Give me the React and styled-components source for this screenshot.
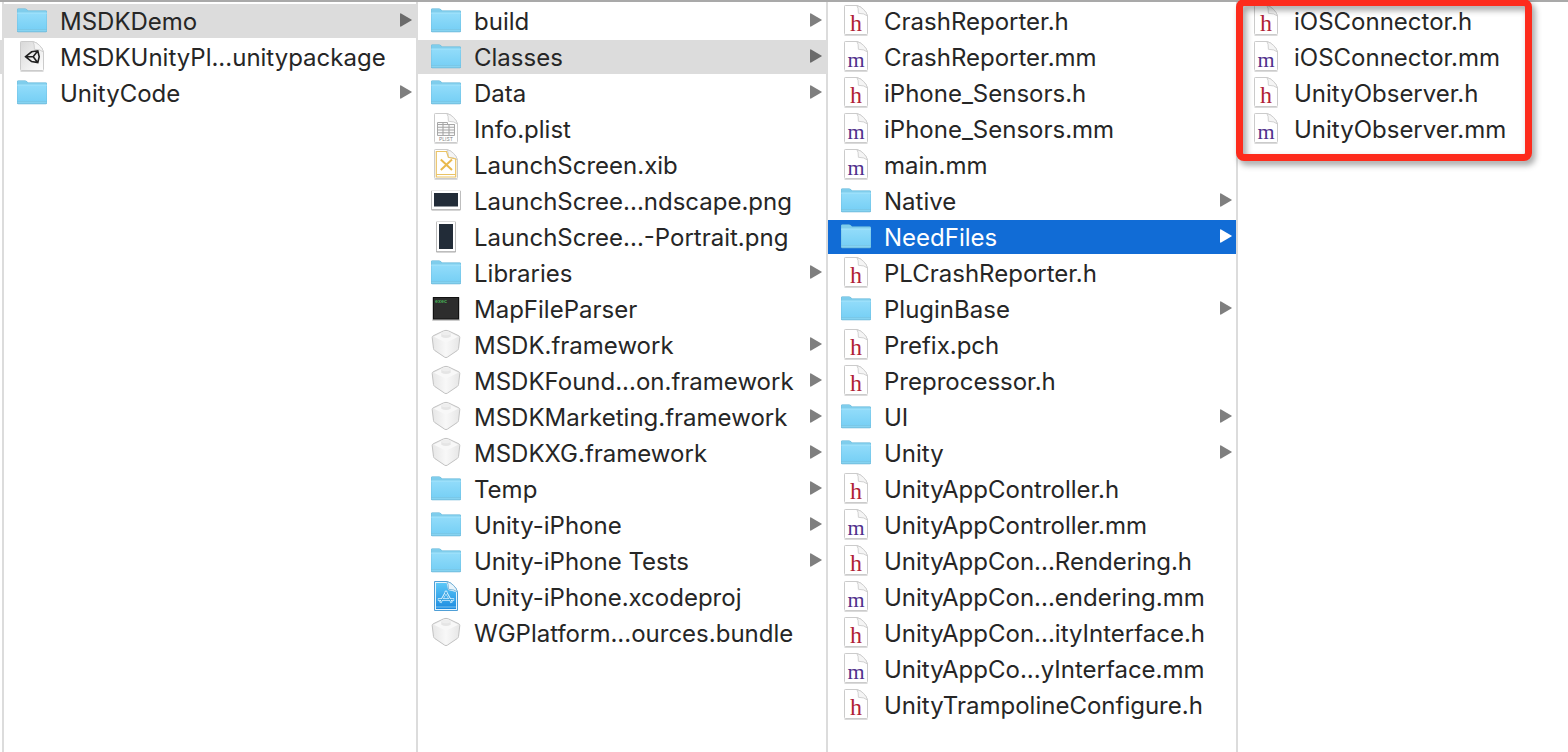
import React from "react";
import styled, { createGlobalStyle } from "styled-components";

const GlobalStyle = createGlobalStyle`
  * { box-sizing: border-box; }
  body { margin: 0; background: #ffffff; }
`;

const Browser = styled.main`
  display: flex;
  flex-direction: column;
  min-height: 100vh;
  border-top: 2px solid #a9a9a9;
  font-family: Inter, "Liberation Sans", sans-serif;
  font-size: 24px;
  color: #262626;
`;

const Columns = styled.div`
  flex: 1;
  display: grid;
  grid-template-columns: 4px 414fr 410fr 410fr 330fr;
`;

const Column = styled.section`
  min-width: 0;
  padding-top: 2px;
  border-right: ${(p) => (p.$last ? "none" : "2px solid #dcdcdc")};
`;

const PreviousRow = styled.div`
  height: 34px;
  margin-top: 36px;
  background: #dcdcdc;
`;

const FileList = styled.ul`
  position: relative;
  display: flex;
  flex-direction: column;
  gap: 2px;
  margin: 0;
  padding: 0;
  list-style: none;
`;

const rowFill = { active: "#116cd6", open: "#dcdcdc" };

const Row = styled.button`
  display: flex;
  align-items: center;
  width: 100%;
  height: 34px;
  padding: 0 4px 0 13px;
  border: 0;
  background: ${(p) => rowFill[p.$state] || "transparent"};
  color: ${(p) => (p.$state === "active" ? "#ffffff" : "inherit")};
  font: inherit;
  text-align: left;
  white-space: nowrap;
`;

const IconSlot = styled.span`
  flex: none;
  display: flex;
  width: 30px;
  height: 32px;
  margin-right: 13px;
`;

const Name = styled.span`
  flex: 1;
  min-width: 0;
  padding-top: 2px;
  line-height: 32px;
`;

const Arrow = styled.svg`
  flex: none;
  width: 12px;
  height: 34px;
  fill: ${(p) => (p.$state === "active" ? "#ffffff" : p.$state === "open" ? "#6b6b6b" : "#7f7f7f")};
`;

const Highlight = styled.li`
  position: absolute;
  top: -5px;
  left: -2px;
  width: 296px;
  height: 162px;
  border: 7px solid #fd2b1c;
  border-radius: 8px;
  filter: drop-shadow(3px 4px 3px rgba(0, 0, 0, 0.38));
  pointer-events: none;
`;

const Glyph = ({ children, box = "0 0 30 32" }) => (
  <svg width="30" height="32" viewBox={box} overflow="visible" aria-hidden="true">
    {children}
  </svg>
);

const DocumentGlyph = ({ children }) => <Glyph box="0 1 30 32">{children}</Glyph>;

const Folder = () => (
  <Glyph>
    <path d="M0 6.2V4.6Q0 3.4 1.2 3.4H8.2Q9 3.4 9.6 4L11 5.4H28.8Q30 5.4 30 6.6V26Q30 27.2 28.8 27.2H1.2Q0 27.2 0 26Z" fill="#68b4d6" />
    <path d="M.3 6.2V4.8Q.3 3.7 1.3 3.7H8.1Q8.8 3.7 9.4 4.3L11 5.8H28.7Q29.7 5.8 29.7 6.8V9H.3Z" fill="#7fcdec" />
    <path d="M.3 8H29.7V24.3H.3Z" fill="url(#folderFace)" />
    <path d="M.3 8H29.7" stroke="#a5e3fb" />
    <path d="M.3 24.4H29.7V25.8Q29.7 26.6 28.8 26.6H1.2Q.3 26.6 .3 25.8Z" fill="#86d3f1" />
  </Glyph>
);

const Sheet = ({ fill = "#ffffff" }) => (
  <>
    <path d="M3.5 31.2H26.5" stroke="#c4c4c4" strokeWidth="1.4" opacity=".7" />
    <path d="M4.3 1.5H16L20 3.3L24.8 8.2L26.5 12V29.5Q26.5 30.5 25.5 30.5H4.5Q3.5 30.5 3.5 29.5V2.3Q3.5 1.5 4.3 1.5Z" fill={fill} stroke="#cbcbcb" />
    <path d="M15.8 1.5Q17.6 3.6 17.4 9.3Q23.4 9.2 26.5 12Q25.6 8.4 22.6 5.4T15.8 1.5Z" fill="#f5f5f5" stroke="#cccccc" strokeWidth=".9" />
  </>
);

const Header = () => (
  <DocumentGlyph>
    <Sheet />
    <text x="15" y="26.5" textAnchor="middle" fontFamily="Liberation Serif, serif" fontSize="24" fill="#b02235">h</text>
  </DocumentGlyph>
);

const Source = () => (
  <DocumentGlyph>
    <Sheet />
    <text x="15" y="26.5" textAnchor="middle" fontFamily="Liberation Serif, serif" fontSize="22" fill="#50308c">m</text>
  </DocumentGlyph>
);

const UnityPackage = () => (
  <DocumentGlyph>
    <Sheet fill="url(#packagePaper)" />
    <path
      d="M8.6 16.7L14.6 11.8L20.8 10.8L22.2 16.7L20.8 22.6L14.6 21.6ZM8.6 16.7H16.2L20.6 11M16.2 16.7L20.6 22.4"
      fill="none"
      stroke="#202020"
      strokeWidth="1.6"
    />
  </DocumentGlyph>
);

const Plist = () => (
  <DocumentGlyph>
    <Sheet />
    <path d="M6.5 10.5H16.5V12.5H23.5V23.5H6.5Z" fill="#fafafa" stroke="#a9a9a9" />
    <path d="M6.5 12.5H23.5M6.5 15.2H23.5M6.5 18H23.5M6.5 20.8H23.5M12 10.5V23.5M18 12.5V23.5" stroke="#a6a6a6" strokeWidth="1.1" />
    <text x="15" y="29" textAnchor="middle" fontSize="5" fill="#858585">PLIST</text>
  </DocumentGlyph>
);

const Xib = () => (
  <DocumentGlyph>
    <Sheet />
    <path d="M5.3 3.5H15.5L17.4 9.3L24.7 11V29H5.3Z" fill="none" stroke="#eac365" strokeWidth="1.2" />
    <path d="M5.3 26.5H24.7" stroke="#eac365" />
    <path d="M9.8 11.6L21 22M21 11.6L9.8 22" stroke="#e9b94c" strokeWidth="2" />
  </DocumentGlyph>
);

const Landscape = () => (
  <Glyph>
    <rect x=".2" y="5.4" width="29.6" height="20" rx="1" fill="#8a8a8a" opacity=".7" />
    <rect x="1" y="5.5" width="28" height="18.7" fill="#ffffff" />
    <rect x="3" y="8" width="24" height="13.5" fill="#222c38" />
  </Glyph>
);

const Portrait = () => (
  <Glyph>
    <rect x="5" y=".6" width="20" height="30.8" rx="1" fill="#8a8a8a" opacity=".7" />
    <rect x="5.8" y=".8" width="18.4" height="29.4" fill="#ffffff" />
    <rect x="8" y="3" width="14" height="25" fill="#222c38" />
  </Glyph>
);

const Terminal = () => (
  <Glyph>
    <rect x="1" y="4" width="28" height="24" rx="1" fill="#cccccc" />
    <rect x="2" y="4" width="26" height="22.5" fill="#111111" />
    <rect x="3" y="5" width="24" height="20.5" fill="#2d2d2d" />
    <text x="4" y="10" fontFamily="Liberation Mono, monospace" fontWeight="700" fontSize="5" fill="#48b557">exec</text>
  </Glyph>
);

const Brick = () => (
  <Glyph>
    <path d="M1.2 8.5Q1.2 7.3 2.2 6.8L12.5 1.9Q15 .8 17.5 1.9L27.8 6.8Q28.8 7.3 28.8 8.5L27.5 19.5Q27.3 20.8 26.4 21.4L16.3 28.2Q15 29 13.7 28.2L3.6 21.4Q2.7 20.8 2.5 19.5Z" fill="url(#brickFace)" stroke="#c2c2c2" />
    <path d="M2.8 7.8L12.7 3.1Q15 2 17.3 3.1L27.2 7.8L16 13.2Q15 13.6 14 13.2Z" fill="#f8f8f8" />
    <path d="M10.3 4.6Q15 6.9 19.7 4.6V7.8Q15 10.2 10.3 7.8Z" fill="#e5e5e5" />
    <ellipse cx="15" cy="4.4" rx="4.7" ry="1.8" fill="#eeeeee" />
  </Glyph>
);

const XcodeProject = () => (
  <DocumentGlyph>
    <path d="M3.5 1.5H16L20 3.3L24.8 8.2L26.5 12V30.5H3.5Z" fill="#e4f5fe" stroke="#4f9fd6" />
    <path d="M5 3H15.6L17.2 10L25 12V29H5Z" fill="url(#projectFace)" />
    <path d="M15.8 1.5Q17.6 3.6 17.4 9.3Q23.4 9.2 26.5 12Q25.6 8.4 22.6 5.4T15.8 1.5Z" fill="#e8f4fb" stroke="#6babd2" strokeWidth=".8" />
    <path d="M15.6 11L9.2 22.6M14.4 11L20.8 22.6M6.8 19.5H23.2" fill="none" stroke="#d7f1ff" strokeWidth="2.4" />
    <path d="M15.5 11.8L9.6 22.2M14.5 11.8L20.4 22.2M7.4 19.5H22.6" fill="none" stroke="#319edc" strokeWidth=".9" />
    <path d="M5 27H25" stroke="#8fd0f5" strokeWidth=".8" />
  </DocumentGlyph>
);

const icons = {
  folder: Folder,
  h: Header,
  m: Source,
  unity: UnityPackage,
  plist: Plist,
  xib: Xib,
  landscape: Landscape,
  portrait: Portrait,
  terminal: Terminal,
  brick: Brick,
  xcode: XcodeProject,
};

const FillDefinitions = styled.svg`
  position: absolute;
  width: 0;
  height: 0;
`;

const SharedFills = () => (
  <FillDefinitions aria-hidden="true">
    <defs>
      <linearGradient id="folderFace" x1="0" y1="0" x2="0" y2="1">
        <stop offset="0" stopColor="#92dcfa" />
        <stop offset="1" stopColor="#78d0f5" />
      </linearGradient>
      <linearGradient id="packagePaper" x1="0" y1="0" x2="1" y2="1">
        <stop offset="0" stopColor="#d8d8d8" />
        <stop offset="1" stopColor="#ffffff" />
      </linearGradient>
      <linearGradient id="brickFace">
        <stop offset="0" stopColor="#e6e6e6" />
        <stop offset=".5" stopColor="#f8f8f8" />
        <stop offset="1" stopColor="#e6e6e6" />
      </linearGradient>
      <linearGradient id="projectFace" x1="0" y1="0" x2="0" y2="1">
        <stop offset="0" stopColor="#5cc8f8" />
        <stop offset="1" stopColor="#1c8be0" />
      </linearGradient>
    </defs>
  </FillDefinitions>
);

const columns = [
  [
    ["folder", "MSDKDemo", true, "open"],
    ["unity", "MSDKUnityPl...unitypackage"],
    ["folder", "UnityCode", true],
  ],
  [
    ["folder", "build", true],
    ["folder", "Classes", true, "open"],
    ["folder", "Data", true],
    ["plist", "Info.plist"],
    ["xib", "LaunchScreen.xib"],
    ["landscape", "LaunchScree...ndscape.png"],
    ["portrait", "LaunchScree...-Portrait.png"],
    ["folder", "Libraries", true],
    ["terminal", "MapFileParser"],
    ["brick", "MSDK.framework", true],
    ["brick", "MSDKFound...on.framework", true],
    ["brick", "MSDKMarketing.framework", true],
    ["brick", "MSDKXG.framework", true],
    ["folder", "Temp", true],
    ["folder", "Unity-iPhone", true],
    ["folder", "Unity-iPhone Tests", true],
    ["xcode", "Unity-iPhone.xcodeproj"],
    ["brick", "WGPlatform...ources.bundle"],
  ],
  [
    ["h", "CrashReporter.h"],
    ["m", "CrashReporter.mm"],
    ["h", "iPhone_Sensors.h"],
    ["m", "iPhone_Sensors.mm"],
    ["m", "main.mm"],
    ["folder", "Native", true],
    ["folder", "NeedFiles", true, "active"],
    ["h", "PLCrashReporter.h"],
    ["folder", "PluginBase", true],
    ["h", "Prefix.pch"],
    ["h", "Preprocessor.h"],
    ["folder", "UI", true],
    ["folder", "Unity", true],
    ["h", "UnityAppController.h"],
    ["m", "UnityAppController.mm"],
    ["h", "UnityAppCon...Rendering.h"],
    ["m", "UnityAppCon...endering.mm"],
    ["h", "UnityAppCon...ityInterface.h"],
    ["m", "UnityAppCo...yInterface.mm"],
    ["h", "UnityTrampolineConfigure.h"],
  ],
  [
    ["h", "iOSConnector.h"],
    ["m", "iOSConnector.mm"],
    ["h", "UnityObserver.h"],
    ["m", "UnityObserver.mm"],
  ],
];

function FileRow({ file: [kind, name, expandable, state] }) {
  const Icon = icons[kind];
  return (
    <li>
      <Row type="button" $state={state}>
        <IconSlot><Icon /></IconSlot>
        <Name>{name}</Name>
        {expandable && (
          <Arrow $state={state} viewBox="0 0 12 34" aria-hidden="true">
            <path d="M0 10.2Q0 9 1.1 9.5L11.3 15.4Q12.3 16 11.3 16.6L1.1 22.5Q0 23 0 21.8Z" />
          </Arrow>
        )}
      </Row>
    </li>
  );
}

export default function App() {
  return (
    <Browser>
      <GlobalStyle />
      <SharedFills />
      <Columns>
        <Column><PreviousRow /></Column>
        {columns.map((files, index) => {
          const last = index === columns.length - 1;
          return (
            <Column key={index} $last={last}>
              <FileList>
                {files.map((file) => <FileRow key={file[1]} file={file} />)}
                {last && <Highlight aria-hidden="true" />}
              </FileList>
            </Column>
          );
        })}
      </Columns>
    </Browser>
  );
}
